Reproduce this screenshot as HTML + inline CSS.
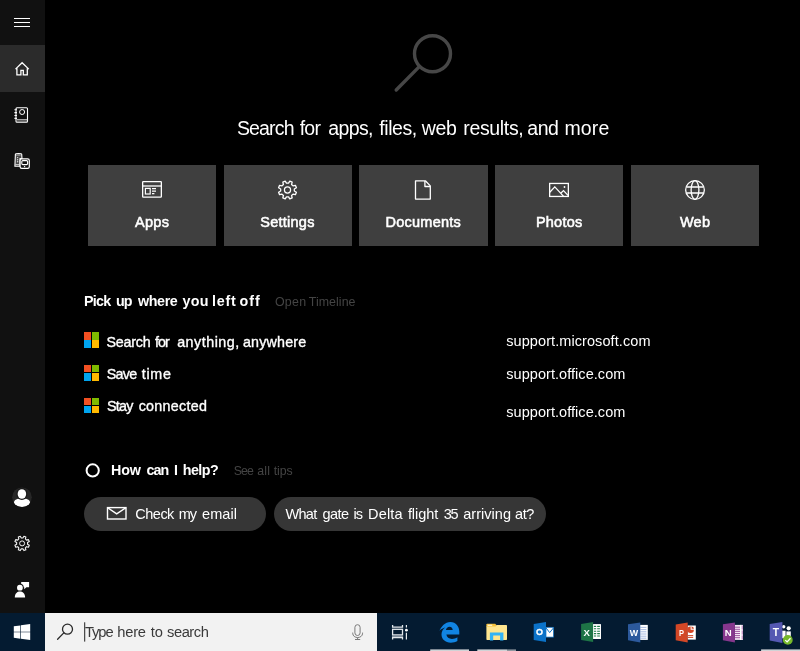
<!DOCTYPE html>
<html lang="en">
<head>
<meta charset="utf-8">
<title>Search</title>
<style>
html,body{margin:0;padding:0;background:#000;}
body{width:800px;height:651px;position:relative;overflow:hidden;font-family:"Liberation Sans",sans-serif;color:#fff;}
.abs{position:absolute;}
.t{position:absolute;white-space:nowrap;line-height:16px;font-size:14.5px;}
#side{left:0;top:0;width:45px;height:613px;background:#111;}
#sel{left:0;top:45.3px;width:45px;height:46.3px;background:#2b2b2b;}
.tile{position:absolute;top:165px;width:128px;height:81px;background:#3f3f3f;}
.tile .lbl{position:absolute;left:0;width:128px;text-align:center;top:49px;font-size:14.5px;font-weight:bold;line-height:16px;letter-spacing:-0.45px;}
.ln{position:absolute;left:0;width:800px;height:24px;white-space:nowrap;will-change:transform;}
.ln span{position:absolute;top:0;display:inline-block;}
.dark{color:#3a3a3a;}
.sb{-webkit-text-stroke:0.35px #fff;}
.sb2{-webkit-text-stroke:0.55px #fff;}
.grey{color:#444;}
.ms{position:absolute;width:16px;height:16px;}
.ms i{position:absolute;width:7.45px;height:7.45px;}
.pill{position:absolute;top:496.5px;height:34px;border-radius:17px;background:#363636;}
#task{left:0;top:612.6px;width:800px;height:39px;background:#041b31;}
#sbox{left:45px;top:612.6px;width:332px;height:39px;background:#f2f2f2;}
svg{position:absolute;left:0;top:0;}
svg text{font-family:"Liberation Sans",sans-serif;font-weight:bold;fill:#fff;}
</style>
</head>
<body>
<div id="side" class="abs"></div>
<div id="sel" class="abs"></div>

<!-- sidebar icons -->
<svg width="45" height="612" viewBox="0 0 45 612" fill="none" stroke="#fff" stroke-width="1.2">
  <!-- hamburger -->
  <path d="M14 18.5H30M14 22.5H30M14 26.5H30" stroke-width="1.1"/>
  <!-- home -->
  <path d="M15.5 69.1 22.1 62.7 28.8 69.1M16.9 68.2V74.9H20.9V70.3H23.3V74.9H27.3V68.2" stroke-width="1.3" stroke-linejoin="miter"/>
  <!-- notebook -->
  <rect x="16" y="107.7" width="11.5" height="14.5" rx="1" stroke-width="1.1"/>
  <path d="M14.4 109.7H17M14.4 112.6H17M14.4 115.5H17M14.4 118.4H17" stroke-width="1.1"/>
  <circle cx="22.1" cy="112" r="2.5" stroke-width="1"/>
  <path d="M16.8 119.5H27.2M16.8 121H27.2" stroke="#bbb" stroke-width="0.9"/>
  <!-- devices -->
  <path d="M15.4 154.3C15.4 153.4 21.7 153.4 21.7 154.3L22 158.6H20V166.2H14.9Z" stroke-width="1.1" fill="#4a4a4a"/>
  <path d="M16 155.2H20.6" stroke="#aaa" stroke-width="0.9"/>
  <path d="M15.2 164.6H19.6" stroke="#ccc" stroke-width="1"/>
  <circle cx="17.6" cy="157.6" r="0.7" fill="#ddd" stroke="none"/>
  <circle cx="17.6" cy="159.7" r="0.7" fill="#ddd" stroke="none"/>
  <circle cx="17.6" cy="161.8" r="0.7" fill="#ddd" stroke="none"/>
  <rect x="20.1" y="158.9" width="9.2" height="9.4" rx="1.6" stroke-width="1.2" fill="#111"/>
  <rect x="21.8" y="160.6" width="5.8" height="4" rx="1" stroke-width="1.1"/>
  <circle cx="24.6" cy="166.6" r="0.7" fill="#fff" stroke="none"/>
  <!-- user -->
  <circle cx="22" cy="497.2" r="9.8" fill="#272727" stroke="none"/>
  <clipPath id="uc"><circle cx="22" cy="497.2" r="9.8"/></clipPath>
  <g clip-path="url(#uc)" stroke="none">
    <path d="M13.8 503.2C13.8 499.6 17.4 498.2 22 498.2C26.6 498.2 30.2 499.6 30.2 503.2C30.2 506.2 26.2 507.4 22 507.4C17.8 507.4 13.8 506.2 13.8 503.2Z" fill="#fff"/>
    <ellipse cx="21.9" cy="494" rx="5.5" ry="6.1" fill="#1a1a1a"/>
    <ellipse cx="21.9" cy="494" rx="4.25" ry="4.85" fill="#fff"/>
  </g>
  <!-- gear -->
  <path d="M22.92 537.96 L23.94 536.23 L25.87 537.03 L25.37 538.98 L26.52 540.13 L28.47 539.63 L29.27 541.56 L27.54 542.58 L27.54 544.22 L29.27 545.24 L28.47 547.17 L26.52 546.67 L25.37 547.82 L25.87 549.77 L23.94 550.57 L22.92 548.84 L21.28 548.84 L20.26 550.57 L18.33 549.77 L18.83 547.82 L17.68 546.67 L15.73 547.17 L14.93 545.24 L16.66 544.22 L16.66 542.58 L14.93 541.56 L15.73 539.63 L17.68 540.13 L18.83 538.98 L18.33 537.03 L20.26 536.23 L21.28 537.96Z" stroke="#f4f4f4" stroke-width="1.1" stroke-linejoin="round"/>
  <circle cx="22.1" cy="543.4" r="2.5" stroke="#f4f4f4" stroke-width="1"/>
  <!-- feedback -->
  <g stroke="none" fill="#fff">
    <path d="M21.2 582H29.1V587.2H26.4L24.2 589.3V587.2H21.2Z"/>
    <circle cx="19.9" cy="587.7" r="3.9" fill="#111"/>
    <circle cx="19.9" cy="587.7" r="2.9"/>
    <path d="M14.8 597.5C14.8 589.6 25.1 589.6 25.1 597.5Z"/>
  </g>
</svg>

<!-- magnifier -->
<svg style="left:380px;top:20px" width="90" height="90" viewBox="0 0 90 90" fill="none" stroke="#474747" stroke-width="3.4" stroke-linecap="round">
  <circle cx="52.5" cy="33.7" r="18"/>
  <path d="M39.3 46.6 16.2 70"/>
</svg>


<div class="tile" style="left:88px"></div>
<div class="tile" style="left:223.75px"></div>
<div class="tile" style="left:359px;width:128.75px"></div>
<div class="tile" style="left:495px"></div>
<div class="tile" style="left:630.75px;width:128.25px"></div>

<!-- tile icons -->
<svg style="left:0;top:170px" width="800" height="40" viewBox="0 170 800 40" fill="none" stroke="#fff" stroke-width="1.3">
  <!-- apps -->
  <rect x="142.65" y="181.65" width="18.7" height="15.5" rx="0.6"/>
  <path d="M142.6 186H161.4"/>
  <rect x="145.4" y="188.4" width="4.8" height="5.6" stroke-width="1.2"/>
  <path d="M152 188.6H156M152 191.1H156M152 193.6H154.4" stroke-width="1.1"/>
  <!-- settings -->
  <path d="M288.53 183.18 L289.79 181.09 L292.18 182.08 L291.60 184.45 L293.05 185.90 L295.42 185.32 L296.41 187.71 L294.32 188.97 L294.32 191.03 L296.41 192.29 L295.42 194.68 L293.05 194.10 L291.60 195.55 L292.18 197.92 L289.79 198.91 L288.53 196.82 L286.47 196.82 L285.21 198.91 L282.82 197.92 L283.40 195.55 L281.95 194.10 L279.58 194.68 L278.59 192.29 L280.68 191.03 L280.68 188.97 L278.59 187.71 L279.58 185.32 L281.95 185.90 L283.40 184.45 L282.82 182.08 L285.21 181.09 L286.47 183.18Z" stroke-linejoin="round" stroke-width="1.3"/>
  <circle cx="287.5" cy="190" r="3.1" stroke-width="1.2"/>
  <!-- documents -->
  <path d="M415.5 180.95H425.6L430.3 185.9V199.05H415.5Z" stroke-linejoin="round"/>
  <path d="M424.9 181V186.5H430.3" stroke-linejoin="round"/>
  <!-- photos -->
  <rect x="549.65" y="183.45" width="18.7" height="13" />
  <path d="M549.8 192.2 554.8 186.9 563.6 196.4M561 192.9 563.5 190.6 568 195.4" stroke-linejoin="miter"/>
  <circle cx="564.5" cy="187" r="0.9" fill="#fff" stroke="none"/>
  <!-- web -->
  <circle cx="695" cy="190" r="9.35"/>
  <ellipse cx="695" cy="190" rx="3.9" ry="9.35"/>
  <path d="M686.3 187H703.7M686.3 193H703.7"/>
</svg>




<div class="ms" style="left:83.75px;top:332.2px"><i style="left:0;top:0;background:#f25022"></i><i style="left:8.25px;top:0;background:#7fba00"></i><i style="left:0;top:8.25px;background:#00a4ef"></i><i style="left:8.25px;top:8.25px;background:#ffb900"></i></div>
<div class="ms" style="left:83.75px;top:365px"><i style="left:0;top:0;background:#f25022"></i><i style="left:8.25px;top:0;background:#7fba00"></i><i style="left:0;top:8.25px;background:#00a4ef"></i><i style="left:8.25px;top:8.25px;background:#ffb900"></i></div>
<div class="ms" style="left:83.75px;top:397.8px"><i style="left:0;top:0;background:#f25022"></i><i style="left:8.25px;top:0;background:#7fba00"></i><i style="left:0;top:8.25px;background:#00a4ef"></i><i style="left:8.25px;top:8.25px;background:#ffb900"></i></div>

<svg style="left:80px;top:460px" width="30" height="22" viewBox="80 460 30 22" fill="none" stroke="#fff" stroke-width="2">
  <circle cx="92.7" cy="470.4" r="6.1"/>
</svg>

<div class="pill" style="left:84px;width:182px"></div>
<div class="pill" style="left:274px;width:272px"></div>
<svg style="left:100px;top:500px" width="34" height="26" viewBox="100 500 34 26" fill="none" stroke="#fff" stroke-width="1.4">
  <rect x="107.5" y="507.6" width="18.5" height="11.4"/>
  <path d="M107.6 507.7 116.7 513.9 125.9 507.7"/>
</svg>

<div id="task" class="abs"></div>
<div id="sbox" class="abs"></div>

<div class="ln " id="head" style="top:115.74px;font-size:19.5px;line-height:24px;font-weight:normal"><span style="left:236.93px;letter-spacing:-0.835px">Search</span> <span style="left:299.65px;letter-spacing:-0.725px">for</span> <span style="left:328.35px;letter-spacing:-0.638px">apps,</span> <span style="left:379.35px;letter-spacing:-0.445px">files,</span> <span style="left:421.80px;letter-spacing:-0.300px">web</span> <span style="left:463.35px;letter-spacing:-0.354px">results,</span> <span style="left:527.35px;letter-spacing:-0.500px">and</span> <span style="left:564.50px;letter-spacing:0.125px">more</span></div>
<div class="ln sb2" id="l1" style="top:213.88px;font-size:14.5px;line-height:16px;font-weight:normal"><span style="left:135.00px;letter-spacing:0.300px">Apps</span></div>
<div class="ln sb2" id="l2" style="top:213.88px;font-size:14.5px;line-height:16px;font-weight:normal"><span style="left:260.27px;letter-spacing:0.250px">Settings</span></div>
<div class="ln sb2" id="l3" style="top:213.88px;font-size:14.5px;line-height:16px;font-weight:normal"><span style="left:385.48px;letter-spacing:0.256px">Documents</span></div>
<div class="ln sb2" id="l4" style="top:213.88px;font-size:14.5px;line-height:16px;font-weight:normal"><span style="left:535.88px;letter-spacing:0.250px">Photos</span></div>
<div class="ln sb2" id="l5" style="top:213.88px;font-size:14.5px;line-height:16px;font-weight:normal"><span style="left:679.88px;letter-spacing:0.312px">Web</span></div>
<div class="ln " id="pick" style="top:293.05px;font-size:14.3px;line-height:16px;font-weight:bold"><span style="left:83.88px;letter-spacing:-0.667px">Pick</span> <span style="left:116.03px;letter-spacing:-1.000px">up</span> <span style="left:138.10px;letter-spacing:-0.419px">where</span> <span style="left:182.38px;letter-spacing:0.312px">you</span> <span style="left:212.10px;letter-spacing:0.750px">left</span> <span style="left:239.50px;letter-spacing:1.000px">off</span></div>
<div class="ln grey" id="opent" style="top:293.80px;font-size:12.4px;line-height:16px;font-weight:normal"><span style="left:274.98px;letter-spacing:0.258px">Open</span> <span style="left:308.75px;letter-spacing:0.054px">Timeline</span></div>
<div class="ln sb" id="r1" style="top:333.65px;font-size:14.3px;line-height:16px;font-weight:normal"><span style="left:106.53px;letter-spacing:-0.220px">Search</span> <span style="left:154.88px;letter-spacing:-0.838px">for</span> <span style="left:177.18px;letter-spacing:0.497px">anything,</span> <span style="left:242.88px;letter-spacing:0.193px">anywhere</span></div>
<div class="ln sb" id="r2" style="top:365.95px;font-size:14.3px;line-height:16px;font-weight:normal"><span style="left:106.67px;letter-spacing:-0.692px">Save</span> <span style="left:141.75px;letter-spacing:0.725px">time</span></div>
<div class="ln sb" id="r3" style="top:398.45px;font-size:14.3px;line-height:16px;font-weight:normal"><span style="left:106.88px;letter-spacing:-0.667px">Stay</span> <span style="left:138.68px;letter-spacing:0.275px">connected</span></div>
<div class="ln " id="u1" style="top:333.48px;font-size:14.5px;line-height:16px;font-weight:normal"><span style="left:506.23px;letter-spacing:0.081px">support.microsoft.com</span></div>
<div class="ln " id="u2" style="top:365.98px;font-size:14.5px;line-height:16px;font-weight:normal"><span style="left:506.23px;letter-spacing:0.054px">support.office.com</span></div>
<div class="ln " id="u3" style="top:403.88px;font-size:14.5px;line-height:16px;font-weight:normal"><span style="left:506.23px;letter-spacing:0.054px">support.office.com</span></div>
<div class="ln " id="how" style="top:462.25px;font-size:14.3px;line-height:16px;font-weight:bold"><span style="left:110.92px;letter-spacing:-0.087px">How</span> <span style="left:146.50px;letter-spacing:-0.975px">can</span> <span style="left:174.03px;letter-spacing:0.000px">I</span> <span style="left:182.75px;letter-spacing:-0.550px">help?</span></div>
<div class="ln grey" id="tips" style="top:462.74px;font-size:12.3px;line-height:16px;font-weight:normal"><span style="left:233.68px;letter-spacing:-0.875px">See</span> <span style="left:257.20px;letter-spacing:0.200px">all</span> <span style="left:273.77px;letter-spacing:-0.075px">tips</span></div>
<div class="ln " id="p1" style="top:506.48px;font-size:14.5px;line-height:16px;font-weight:normal"><span style="left:135.35px;letter-spacing:-0.519px">Check</span> <span style="left:178.70px;letter-spacing:-1.050px">my</span> <span style="left:201.97px;letter-spacing:0.119px">email</span></div>
<div class="ln " id="p2" style="top:506.48px;font-size:14.5px;line-height:16px;font-weight:normal"><span style="left:285.48px;letter-spacing:-0.675px">What</span> <span style="left:322.48px;letter-spacing:-0.567px">gate</span> <span style="left:353.60px;letter-spacing:-1.000px">is</span> <span style="left:368.12px;letter-spacing:0.125px">Delta</span> <span style="left:407.88px;letter-spacing:-0.055px">flight</span> <span style="left:443.70px;letter-spacing:-1.200px">35</span> <span style="left:463.18px;letter-spacing:0.043px">arriving</span> <span style="left:514.98px;letter-spacing:-0.400px">at?</span></div>
<div class="ln dark" id="type" style="top:624.41px;font-size:14.7px;line-height:16px;font-weight:normal"><span style="left:85.00px;letter-spacing:-1.083px">Type</span> <span style="left:117.30px;letter-spacing:-0.250px">here</span> <span style="left:150.75px;letter-spacing:0.025px">to</span> <span style="left:167.03px;letter-spacing:-0.450px">search</span></div>

<!-- taskbar icons -->
<svg style="left:0;top:612px" width="800" height="39" viewBox="0 612 800 39">
  <!-- windows logo -->
  <g fill="#fff">
    <path d="M13.8 626.3 20.3 625.4V631.75H13.8Z"/>
    <path d="M20.9 625.3 30.2 624.05V631.75H20.9Z"/>
    <path d="M13.8 632.35H20.3V638.7L13.8 637.8Z"/>
    <path d="M20.9 632.35H30.2V640.05L20.9 638.8Z"/>
  </g>
  <!-- search glyph -->
  <g fill="none" stroke="#2b2b2b" stroke-width="1.3" stroke-linecap="round">
    <circle cx="67.5" cy="629.2" r="5"/>
    <path d="M63.8 632.9 57.6 639.3"/>
  </g>
  <!-- caret -->
  <rect x="84.2" y="622.3" width="1" height="19.3" fill="#222"/>
  <!-- mic -->
  <g fill="none" stroke="#7a7a7a" stroke-width="1">
    <rect x="354.9" y="624.7" width="5.2" height="10.8" rx="2.6"/>
    <path d="M352.7 632.6V633.2C352.7 639 362.6 639 362.6 633.2V632.6M357.6 637.6V639.5M355 639.5H360.2"/>
  </g>
  <!-- task view -->
  <g fill="none" stroke="#e3e8ec" stroke-width="1.3">
    <path d="M392.6 625V627.1H402.5V625"/>
    <rect x="392.6" y="629.3" width="9.9" height="5.6"/>
    <path d="M392.6 639.6V637.5H402.5V639.6"/>
    <path d="M392 636H403.1" stroke="#8d99a5" stroke-width="1.8"/>
    <path d="M406.4 625V627.6M406.4 632.8V639.6" stroke-width="1.2"/>
    <circle cx="406.4" cy="630.2" r="1.4" fill="#fff" stroke="none"/>
  </g>
  <!-- edge -->
  <path fill="#1184e2" d="M439.4 630.8C441.2 626.6 445 621.9 450.4 621.9C456 621.9 459.3 626.5 459.3 631.6V634.6H446.4C446.6 637.4 449 638.9 452 638.9C454 638.9 455.9 638.3 457.4 637.2V641C455.5 642.1 453.3 642.7 450.8 642.7C445.4 642.7 441.5 639.4 441.5 634.6C441.5 631.6 442.9 629 445.2 627.5C443 628 441 629 439.4 630.8ZM445.9 629.9H452.7C452.6 628 451.6 626.7 449.5 626.7C447.7 626.7 446.3 628.1 445.9 629.9Z"/>
  <rect x="430.2" y="649.4" width="38.8" height="1.6" fill="#d0d3d6"/>
  <!-- explorer -->
  <path fill="#f4c03a" d="M486.4 624.4C486.4 624 486.8 623.7 487.2 623.7H495.2L496.6 625.3V627H486.4Z"/>
  <rect x="487.6" y="624.7" width="4.6" height="1.2" fill="#fff6d8"/>
  <path fill="#ffe58e" d="M486.4 626.4H495.6L496.7 625H506.3C506.7 625 507 625.3 507 625.7V639.2C507 639.6 506.7 639.9 506.3 639.9H487.1C486.7 639.9 486.4 639.6 486.4 639.2Z"/>
  <path fill="#33b3f5" d="M489.9 632.4H503.4V640.5H500.1V635.5H493.2V640.5H489.9Z"/>
  <rect x="477.3" y="649.4" width="29.7" height="1.6" fill="#d0d3d6"/>
  <rect x="507" y="649.4" width="9" height="1.6" fill="#8e979f"/>
  <!-- outlook -->
  <rect x="546" y="627.3" width="7.5" height="9.8" fill="#fff" stroke="#0a6fc4" stroke-width="0.7"/>
  <path d="M546.2 628.1 549.7 632.6 553.5 627.9" fill="none" stroke="#0a6fc4" stroke-width="1"/>
  <path fill="#0b72c8" d="M533.7 624 546 621.9V642L533.7 639.9Z"/>
  <text x="539.5" y="635.4" font-size="9" text-anchor="middle" stroke="#fff" stroke-width="0.3">O</text>
  <!-- excel -->
  <rect x="592.8" y="624.3" width="8.1" height="14.7" fill="#fff"/>
  <path d="M593 626.4H600M593 628.8H600M593 631.2H600M593 633.6H600M593 636H600" stroke="#1f7a48" stroke-width="1.1"/>
  <path d="M596.7 625V638.4" stroke="#fff" stroke-width="1"/>
  <rect x="593.4" y="624.8" width="7" height="13.7" fill="none" stroke="#fff" stroke-width="1"/>
  <path fill="#1e7446" d="M581.1 624 593.1 621.9V642L581.1 639.9Z"/>
  <text x="586.8" y="635.6" font-size="9.6" text-anchor="middle">X</text>
  <!-- word -->
  <rect x="640" y="624.9" width="7.8" height="15" fill="#fff"/>
  <path d="M640.5 627.4H646.4M640.5 629.6H646.4M640.5 631.8H646.4M640.5 634H646.4M640.5 636.2H646.4M640.5 638.2H646.4" stroke="#a9bbe0" stroke-width="1"/>
  <path fill="#2c599c" d="M628 624.3 640.3 622.5V642.6L628 640.2Z"/>
  <text x="634" y="635.7" font-size="8.9" text-anchor="middle">W</text>
  <!-- powerpoint -->
  <rect x="687.5" y="625.5" width="8.3" height="14.1" fill="#fff"/>
  <circle cx="690.6" cy="629.8" r="3.3" fill="#d24726"/>
  <path d="M690.6 629.8V626.2A3.6 3.6 0 0 1 694.2 629.8Z" fill="#fff"/>
  <path d="M691.6 628.8V626.4A3 3 0 0 1 694 628.8Z" fill="#d24726"/>
  <path d="M688 635.6H693.2M688 637.4H693.2" stroke="#d24726" stroke-width="1"/>
  <path fill="#d24726" d="M675.7 624.6 687.7 622.5V642.6L675.7 640.2Z"/>
  <text x="681.5" y="635.9" font-size="9.8" text-anchor="middle" textLength="5" lengthAdjust="spacingAndGlyphs">P</text>
  <!-- onenote -->
  <rect x="734.8" y="624.9" width="8.2" height="15" fill="#f4e6f4"/>
  <path d="M735 627.2H740M735 629.3H740M735 631.4H740M735 633.5H740M735 635.6H740M735 637.7H740" stroke="#a157a2" stroke-width="1"/>
  <rect x="740" y="624.9" width="1.6" height="15" fill="#fff"/>
  <path d="M742.3 625.5V629.4M742.3 630.6V634.4M742.3 635.5V639.3" stroke="#c89bc9" stroke-width="1.4"/>
  <path fill="#86378d" d="M722.9 624.3 734.9 622.5V642.6L722.9 640.2Z"/>
  <text x="728.3" y="635.7" font-size="9.6" text-anchor="middle">N</text>
  <!-- teams -->
  <circle cx="783.7" cy="626.8" r="1.7" fill="#fff"/>
  <circle cx="788.7" cy="628.3" r="2.1" fill="#fff"/>
  <rect x="782" y="630.7" width="3.6" height="7.6" fill="#fff"/>
  <rect x="786.4" y="631.4" width="4.4" height="5.6" fill="#fff"/>
  <path fill="#5558b2" d="M769.7 624 782.4 621.9V642.9L769.7 640.5Z"/>
  <text x="776" y="635.9" font-size="10.4" text-anchor="middle">T</text>
  <circle cx="787.8" cy="639.9" r="4.9" fill="#76b82a"/>
  <path d="M785.3 640.1 787.1 641.9 790.5 638.3" fill="none" stroke="#fff" stroke-width="1.3"/>
  <rect x="761.1" y="649.4" width="38.9" height="1.6" fill="#d0d3d6"/>
</svg>
</body>
</html>
